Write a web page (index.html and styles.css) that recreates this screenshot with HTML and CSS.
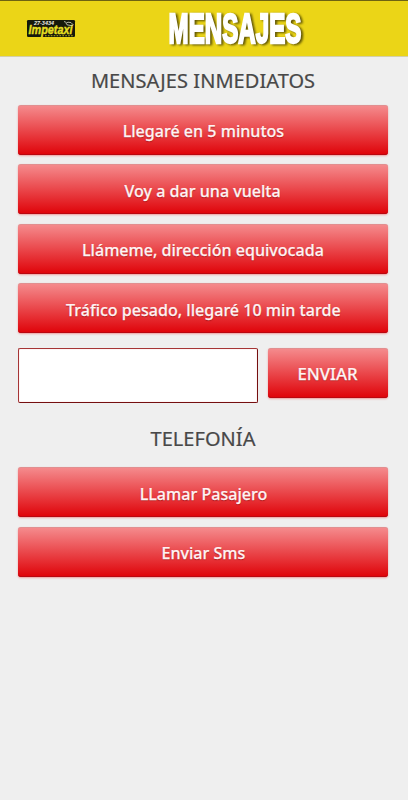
FILE: index.html
```
<!DOCTYPE html>
<html lang="es">
<head>
<meta charset="utf-8">
<title>Mensajes</title>
<link rel="stylesheet" href="styles.css">
</head>
<body>
<header class="bar">
  <svg class="logo" viewBox="0 0 48 17" width="48" height="17">
    <rect width="48" height="17" rx="1.2" fill="#15190b"/>
    <text x="7" y="5" class="logo-phone" textLength="20" lengthAdjust="spacingAndGlyphs">27-3434</text>
    <text x="1.5" y="13.7" class="logo-name" textLength="44" lengthAdjust="spacingAndGlyphs">Impetaxi</text>
    <path d="M37 1.5l2 .8M39 3.2l2-1 3 .4 2 2-1 1.2-5-1z" fill="none" stroke="#d9dccb" stroke-width=".8"/>
    <path d="M18 15.7h28" stroke="#b9b51c" stroke-width="1.1" stroke-dasharray="1.6 1.3"/>
  </svg>
  <svg class="title" viewBox="0 0 140 40" width="140" height="40">
    <text x="2.5" y="34.5" textLength="133" lengthAdjust="spacingAndGlyphs">MENSAJES</text>
  </svg>
</header>
<main class="content">
  <h2 class="heading"><span>MENSAJES INMEDIATOS</span></h2>
  <div class="stack">
    <button class="btn"><span>Llegaré en 5 minutos</span></button>
    <button class="btn"><span>Voy a dar una vuelta</span></button>
    <button class="btn"><span>Llámeme, dirección equivocada</span></button>
    <button class="btn"><span>Tráfico pesado, llegaré 10 min tarde</span></button>
  </div>
  <div class="compose">
    <input class="field" type="text" aria-label="Mensaje">
    <button class="btn send"><span>ENVIAR</span></button>
  </div>
  <h2 class="heading phone"><span>TELEFONÍA</span></h2>
  <div class="stack">
    <button class="btn"><span>LLamar Pasajero</span></button>
    <button class="btn"><span>Enviar Sms</span></button>
  </div>
</main>
</body>
</html>
```
FILE: styles.css
```
* { box-sizing: border-box; }
body {
  margin: 0;
  min-height: 800px;
  background: #efefef;
  font-family: "Noto Sans", sans-serif;
}
.bar {
  display: flex;
  height: 57px;
  padding-left: 27px;
  background: #ebd517;
  border-top: 1px solid #6e6311;
  border-bottom: 1px solid #d3cfa8;
}
.logo { margin-top: 19px; overflow: visible; }
.logo-phone {
  font: italic bold 5px "Liberation Sans", sans-serif;
  fill: #f1f1e4;
}
.logo-name {
  font: italic bold 12.5px "Liberation Sans", sans-serif;
  fill: #e5df20;
  stroke: #e5df20;
  stroke-width: .4px;
}
.title {
  margin: 7px 0 0 91px;
  overflow: visible;
  filter: drop-shadow(2px 1px 1px rgba(70, 62, 0, .85));
}
.title text {
  font: bold 42px "Liberation Sans", sans-serif;
  fill: #fff;
  stroke: #fff;
  stroke-width: 2.4px;
}
.content { padding: 0 20px 0 18px; }
.heading {
  display: flex;
  justify-content: center;
  align-items: center;
  height: 48px;
  margin: 0;
  color: #484848;
  font-size: 20px;
  font-weight: 400;
  line-height: 28px;
  letter-spacing: .05px;
  white-space: nowrap;
  -webkit-text-stroke: .2px #484848;
}
.stack {
  display: flex;
  flex-direction: column;
  gap: 9.5px;
}
.btn {
  width: 100%;
  height: 49.9px;
  margin-bottom: .1px;
  padding: 1px 0 0;
  border: 0;
  border-radius: 3px;
  background: linear-gradient(#f58d8f, #df0208);
  box-shadow: inset 0 -1px #b90710, inset 0 1px rgba(205, 145, 145, .5), 0 1px 2px rgba(235, 60, 60, .45);
  color: #fff3f3;
  font: 500 17px/24px "Noto Sans", sans-serif;
  text-shadow: 0 1px 1px rgba(110, 0, 0, .5);
  white-space: nowrap;
  -webkit-text-stroke: .25px #fff3f3;
}
.btn span {
  display: inline-block;
  transform: translateY(.5px) scaleX(.945);
}
.compose {
  display: flex;
  align-items: flex-start;
  gap: 10px;
  margin-top: 14.5px;
}
.field {
  width: 240px;
  height: 55px;
  border: 1px solid #a63435;
  border-right-color: #750f10;
  border-bottom-color: #750f10;
  border-radius: 2px;
  background: #fff;
  box-shadow: inset 0 0 1px #f0a0a0;
}
.send { width: 120px; }
.send span { transform: translateY(.5px) scaleX(.985); }
.phone { height: 64.5px; padding-top: 7px; }
```
